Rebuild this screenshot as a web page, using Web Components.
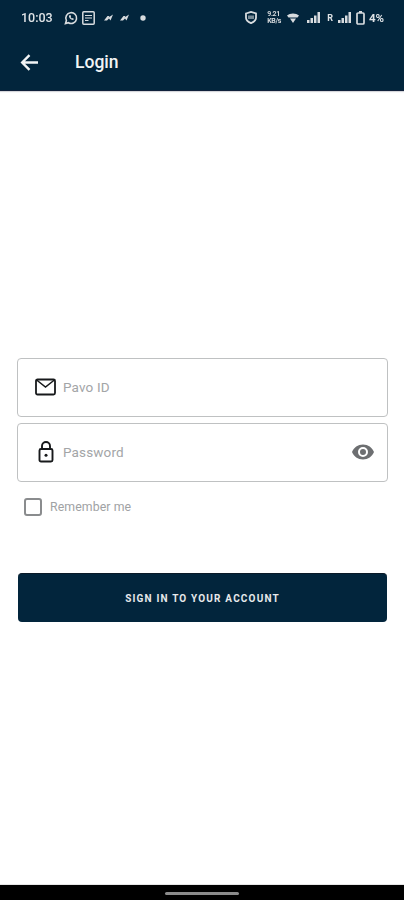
<!DOCTYPE html>
<html>
<head>
<meta charset="utf-8">
<title>Login</title>
<style>
  html, body { margin: 0; padding: 0; background: #fff; }
  body { width: 404px; height: 900px; overflow: hidden; font-family: Roboto, "Liberation Sans", sans-serif; display: flex; flex-direction: column; }
</style>
</head>
<body>
<status-bar></status-bar>
<app-bar>Login</app-bar>
<login-form></login-form>
<nav-strip></nav-strip>

<script>
class StatusBar extends HTMLElement {
  constructor() {
    super();
    this.attachShadow({ mode: 'open' });
    const bars = `<rect class="fill" x="0" y="8" width="2.500" height="3"/><rect class="fill" x="3.500" y="6" width="2.500" height="5"/><rect class="fill" x="7" y="3.500" width="2.500" height="7.500"/><rect class="fill" x="10.500" y="0" width="2.500" height="11"/>`;
    const arrow = `<path class="fill" d="M0 6.500l3.500-4.500h2L4.500 3.500 9 .5 6.500 6.500 5 4.500 3 6.500z"/>`;
    this.shadowRoot.innerHTML = `
      <style>
        :host { display: flex; align-items: center; height: 35px; padding: 0 20px 0 21px; background: #02253c; color: #dfe3e6; font: 500 12.500px Roboto, sans-serif; }
        .left, .right { display: flex; align-items: center; filter: blur(.35px); }
        .right { margin-left: auto; }
        svg { display: block; fill: none; stroke: #d8dcdf; }
        .fill { fill: #d8dcdf; stroke: none; }
        .tiny { font-size: 7px; line-height: 7px; text-align: center; font-weight: 700; width: 13px; color: #d4d8db; white-space: nowrap; letter-spacing: -.3px; }
      </style>
      <div class="left">
        <span>10:03</span>
        <svg style="margin-left:11px" width="14" height="14" viewBox="0 0 14 14" stroke-width="1.600"><path d="M1.500 12.500l.9-3A5.400 5.400 0 1 1 4.500 11.700z"/><path d="M5 4.500c-.5 2 2 4.700 4.300 4.400l.5-1.200-1.300-.7-.6.500c-.6-.3-1-.8-1.300-1.400l.5-.6-.6-1.400z" class="fill"/></svg>
        <svg style="margin-left:4px" width="13" height="14" viewBox="0 0 13 14" stroke-width="1.500"><rect x=".8" y=".8" width="11.400" height="12.400" rx="1"/><path d="M3 4.500h7M3 7h7M3 9.500h3.500" stroke-width="1.100"/></svg>
        <svg style="margin-left:9px" width="9" height="7" viewBox="0 0 9 7">${arrow}</svg>
        <svg style="margin-left:7px" width="9" height="7" viewBox="0 0 9 7">${arrow}</svg>
        <svg style="margin-left:11px" width="6" height="6" viewBox="0 0 6 6"><circle class="fill" cx="3" cy="3" r="2.700"/></svg>
      </div>
      <div class="right">
        <svg width="12" height="13" viewBox="0 0 12 13" stroke-width="1.800"><path d="M1 2.500l5-1.600 5 1.600v4.300c0 2.700-2.300 4.300-5 5.400-2.700-1.100-5-2.700-5-5.400z"/><path d="M4 4.500v3.500M6 4.500v3.500M8 4.500v3.500" stroke-width="1.100"/></svg>
        <div class="tiny" style="margin-left:10px">9.21<br>KB/s</div>
        <svg style="margin-left:7px" width="12" height="10" viewBox="0 0 12 10"><path class="fill" d="M0 2.500C3 -.3 9 -.3 12 2.500L10.500 4.500h-9zM3 5.500h6L6 10z"/></svg>
        <svg style="margin-left:8px" width="13" height="11" viewBox="0 0 13 11">${bars}</svg>
        <span style="margin-left:7px;font-size:9px;font-weight:700">R</span>
        <svg style="margin-left:5px" width="13" height="11" viewBox="0 0 13 11">${bars}</svg>
        <svg style="margin-left:5px" width="9" height="14" viewBox="0 0 9 14" stroke-width="1.700"><rect x="1" y="2" width="7" height="11" rx="1"/><path class="fill" d="M3 0h3v2H3z"/></svg>
        <span style="margin-left:4px;font-size:11.500px;font-weight:700">4%</span>
      </div>
    `;
  }
}

class AppBar extends HTMLElement {
  constructor() {
    super();
    this.attachShadow({ mode: 'open' });
    this.shadowRoot.innerHTML = `
      <style>
        :host { display: flex; align-items: center; box-sizing: border-box; height: 56px; padding: 0 0 1px 20px; background: #02253c; border-bottom: 1px solid #10203a; color: #f2f4f5; font: 500 17.500px Roboto, sans-serif; box-shadow: 0 1px 1px #d5d6da; }
        svg { display: block; margin-right: 36px; }
      </style>
      <svg width="19" height="19" viewBox="0 0 19 19" fill="none" stroke="#f2f4f5" stroke-width="2.400"><path d="M18 9.500H2.500M9.500 2.200L2.200 9.500l7.300 7.300"/></svg>
      <slot></slot>
    `;
  }
}

class TextField extends HTMLElement {
  constructor() {
    super();
    this.attachShadow({ mode: 'open' });
    this.shadowRoot.innerHTML = `
      <style>
        :host { display: flex; align-items: center; box-sizing: border-box; height: 59px; padding: 0 12px 2px 17px; border: 1px solid #bfc1c2; border-top-width: 1.500px; border-radius: 4px; background: #fff; color: #a3a5a7; font: 400 13.500px Roboto, sans-serif; }
        .icon { display: flex; justify-content: center; width: 21px; margin-right: 7px; }
        .label { flex: 1; letter-spacing: .15px; }
      </style>
      <span class="icon"><slot name="icon"></slot></span>
      <span class="label"><slot></slot></span>
      <slot name="end"></slot>
    `;
  }
}

class CheckRow extends HTMLElement {
  constructor() {
    super();
    this.attachShadow({ mode: 'open' });
    this.shadowRoot.innerHTML = `
      <style>
        :host { display: flex; align-items: center; color: #a0a2a4; font: 400 12.300px Roboto, sans-serif; letter-spacing: .1px; }
        .box { box-sizing: border-box; width: 18px; height: 18px; border: 2px solid #8a8c8e; border-radius: 3px; margin-right: 8px; }
      </style>
      <span class="box"></span><slot></slot>
    `;
  }
}

class PrimaryButton extends HTMLElement {
  constructor() {
    super();
    this.attachShadow({ mode: 'open' });
    this.shadowRoot.innerHTML = `
      <style>
        :host { display: flex; align-items: center; justify-content: center; box-sizing: border-box; height: 49px; background: #02253c; border-top: 1px solid #0a1a28; border-radius: 4px; color: #e6e9eb; font: 700 10px Roboto, sans-serif; letter-spacing: 1.170px; }
      </style>
      <slot></slot>
    `;
  }
}

class LoginForm extends HTMLElement {
  constructor() {
    super();
    this.attachShadow({ mode: 'open' });
    this.shadowRoot.innerHTML = `
      <style>
        :host { display: flex; flex-direction: column; flex: 1; padding: 267px 16px 0 17px; }
        text-field + text-field { margin-top: 6px; }
        check-row { margin: 16px 0 0 7px; }
        primary-button { margin: 57px 0 0 1px; width: 369px; }
        svg { display: block; }
      </style>
      <text-field>
        <svg slot="icon" width="21" height="18" viewBox="0 0 21 18" fill="none" stroke="#17191b" stroke-width="1.800"><rect x="1" y="1.500" width="19" height="15" rx="1.500"/><path d="M1 1.500l9.500 7.500 9.500-7.500" stroke-width="1.500"/></svg>
        Pavo ID
      </text-field>
      <text-field>
        <svg slot="icon" width="16" height="22" viewBox="0 0 16 22" fill="none" stroke="#17191b" stroke-width="1.900"><rect x="1.500" y="8" width="13" height="12.500" rx="1.500"/><path d="M4 8V5a4 4 0 0 1 8 0v3"/><circle cx="8" cy="14.200" r="1.500" fill="#17191b" stroke="none"/></svg>
        Password
        <svg slot="end" width="24" height="24" viewBox="0 0 24 24" fill="#6d6f71"><path d="M12 4.500C7 4.500 2.700 7.600 1 12c1.700 4.400 6 7.500 11 7.500s9.300-3.100 11-7.500c-1.700-4.400-6-7.500-11-7.500zM12 17a5 5 0 1 1 0-10 5 5 0 0 1 0 10zm0-8a3 3 0 1 0 0 6 3 3 0 0 0 0-6z"/></svg>
      </text-field>
      <check-row>Remember me</check-row>
      <primary-button>SIGN IN TO YOUR ACCOUNT</primary-button>
    `;
  }
}

class NavStrip extends HTMLElement {
  constructor() {
    super();
    this.attachShadow({ mode: 'open' });
    this.shadowRoot.innerHTML = `
      <style>
        :host { display: flex; justify-content: center; height: 16px; background: #000; border-top: 1px solid #e6e6e6; box-sizing: border-box; }
        .pill { width: 74px; height: 3px; margin-top: 7px; border-radius: 2px; background: #8b8b8b; }
      </style>
      <div class="pill"></div>
    `;
  }
}

customElements.define('status-bar', StatusBar);
customElements.define('app-bar', AppBar);
customElements.define('text-field', TextField);
customElements.define('check-row', CheckRow);
customElements.define('primary-button', PrimaryButton);
customElements.define('login-form', LoginForm);
customElements.define('nav-strip', NavStrip);
</script>
</body>
</html>
